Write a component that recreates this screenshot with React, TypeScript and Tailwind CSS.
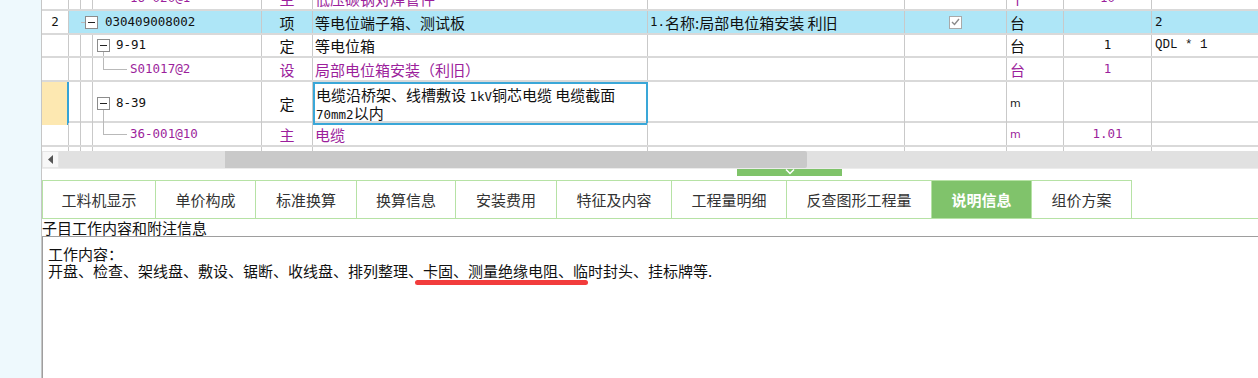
import React from 'react'

const GRID = 'grid grid-cols-[27px_12px_12px_169px_51px_335px_257px_102px_57px_88px_106px]'
const V = 'border-r border-[#c9c9c9]'
const ROW = 'border-b-2 border-[#d9d9d9]'
const PURPLE = 'text-[#9c1f9c]'
const MONO = "font-['DejaVu_Sans_Mono',monospace] text-[12.5px]"
const HL = 'bg-[#aee6f7]'

function Minus() {
  return (
    <span className="flex h-[13px] w-[13px] shrink-0 items-center justify-center border border-[#8c8c8c] bg-white">
      <span className="h-px w-[7px] bg-[#222]" />
    </span>
  )
}

// dim lines of the tree column
function Tline({ className }: { className: string }) {
  return <span className={`absolute bg-[#b9b9b9] ${className}`} />
}

function Check() {
  return (
    <span className="flex h-[13px] w-[13px] items-center justify-center border border-[#a9a9a9] bg-white">
      <svg width="9" height="8" viewBox="0 0 9 8">
        <path d="M1 4 L3.5 6.5 L8 1" fill="none" stroke="#8a8a8a" strokeWidth="1.4" />
      </svg>
    </span>
  )
}

function Table() {
  return (
    <div className="flex h-[151px] flex-col overflow-hidden">
      {/* row cut by the top edge */}
      <div className={`${GRID} ${ROW} -mt-[13px] h-[24px] shrink-0 ${PURPLE}`}>
        <div className={V} />
        <div className={V} />
        <div className={V} />
        <div className={`${V} flex items-center pl-[37px] ${MONO}`}>16-020@1</div>
        <div className={`${V} flex items-center justify-center`}>主</div>
        <div className={`${V} flex items-center pl-[2px]`}>低压碳钢对焊管件</div>
        <div className={V} />
        <div className={V} />
        <div className={`${V} flex items-center pl-[3px]`}>个</div>
        <div className={`${V} flex items-center justify-center ${MONO}`}>10</div>
        <div />
      </div>

      {/* 2 - 030409008002 */}
      <div className={`${GRID} ${ROW} h-[24px] shrink-0`}>
        <div className={`${V} flex items-center justify-center bg-white ${MONO}`}>2</div>
        <div className={`${V} ${HL} relative col-span-3 flex items-center pl-[16px]`}>
          <Tline className="left-[12px] top-1/2 h-px w-[4px]" />
          <Minus />
          <span className={`ml-[7px] ${MONO}`}>030409008002</span>
        </div>
        <div className={`${V} ${HL} flex items-center justify-center`}>项</div>
        <div className={`${V} ${HL} flex items-center pl-[2px]`}>等电位端子箱、测试板</div>
        <div className={`${V} ${HL} flex items-center pl-[2px]`}>
          <span className={MONO}>1.</span>名称:局部电位箱安装 利旧
        </div>
        <div className={`${V} ${HL} flex items-center justify-center`}>
          <Check />
        </div>
        <div className={`${V} ${HL} flex items-center pl-[3px]`}>台</div>
        <div className={`${V} ${HL}`} />
        <div className={`${HL} flex items-center pl-[3px] ${MONO}`}>2</div>
      </div>

      {/* 9-91 */}
      <div className={`${GRID} ${ROW} h-[23px] shrink-0`}>
        <div className={V} />
        <div className={V} />
        <div className={V} />
        <div className={`${V} relative flex items-center pl-[4px]`}>
          <Tline className="bottom-0 left-[10px] top-[calc(50%+6px)] w-px" />
          <Minus />
          <span className={`ml-[6px] ${MONO}`}>9-91</span>
        </div>
        <div className={`${V} flex items-center justify-center`}>定</div>
        <div className={`${V} flex items-center pl-[2px]`}>等电位箱</div>
        <div className={V} />
        <div className={V} />
        <div className={`${V} flex items-center pl-[3px]`}>台</div>
        <div className={`${V} flex items-center justify-center ${MONO}`}>1</div>
        <div className="flex items-center pl-[3px] font-['Liberation_Mono',monospace] text-[12.5px]">QDL * 1</div>
      </div>

      {/* S01017@2 */}
      <div className={`${GRID} ${ROW} h-[24px] shrink-0 ${PURPLE}`}>
        <div className={V} />
        <div className={V} />
        <div className={V} />
        <div className={`${V} relative flex items-center pl-[37px]`}>
          <Tline className="left-[10px] top-0 h-1/2 w-px" />
          <Tline className="left-[10px] top-1/2 h-px w-[24px]" />
          <span className={MONO}>S01017@2</span>
        </div>
        <div className={`${V} flex items-center justify-center`}>设</div>
        <div className={`${V} flex items-center pl-[2px]`}>局部电位箱安装（利旧）</div>
        <div className={V} />
        <div className={V} />
        <div className={`${V} flex items-center pl-[3px]`}>台</div>
        <div className={`${V} flex items-center justify-center ${MONO}`}>1</div>
        <div />
      </div>

      {/* 8-39 */}
      <div className={`${GRID} ${ROW} h-[41px] shrink-0`}>
        <div className="border-r-2 border-[#35a3d6] bg-[#fde8b1]" />
        <div className={V} />
        <div className={V} />
        <div className={`${V} relative flex items-center pl-[4px]`}>
          <Tline className="bottom-0 left-[10px] top-[calc(50%+6px)] w-px" />
          <Minus />
          <span className={`ml-[6px] ${MONO}`}>8-39</span>
        </div>
        <div className={`${V} flex items-center justify-center`}>定</div>
        <div className="flex flex-col justify-center border-2 border-[#3aa7d8] pl-[1px] pt-[3px] leading-[16px]">
          <span>
            电缆沿桥架、线槽敷设 <span className={MONO}>1kV</span>铜芯电缆 电缆截面
          </span>
          <span>
            <span className={MONO}>70mm2</span>以内
          </span>
        </div>
        <div className={V} />
        <div className={V} />
        <div className={`${V} flex items-center pl-[3px] font-['DejaVu_Sans',sans-serif] text-[11px] text-[#222]`}>m</div>
        <div className={V} />
        <div />
      </div>

      {/* 36-001@10 */}
      <div className={`${GRID} ${ROW} h-[24px] shrink-0 ${PURPLE}`}>
        <div className={V} />
        <div className={V} />
        <div className={V} />
        <div className={`${V} relative flex items-center pl-[37px]`}>
          <Tline className="left-[10px] top-0 h-1/2 w-px" />
          <Tline className="left-[10px] top-1/2 h-px w-[24px]" />
          <span className={MONO}>36-001@10</span>
        </div>
        <div className={`${V} flex items-center justify-center`}>主</div>
        <div className={`${V} flex items-center pl-[2px]`}>电缆</div>
        <div className={V} />
        <div className={V} />
        <div className={`${V} flex items-center pl-[3px] font-['DejaVu_Sans',sans-serif] text-[11px]`}>m</div>
        <div className={`${V} flex items-center justify-center ${MONO}`}>1.01</div>
        <div />
      </div>

      {/* next row, barely visible */}
      <div className={`${GRID} h-[10px] shrink-0`}>
        <div className={V} />
        <div className={V} />
        <div className={V} />
        <div className={V} />
        <div className={V} />
        <div className={V} />
        <div className={V} />
        <div className={V} />
        <div className={V} />
        <div className={V} />
        <div />
      </div>
    </div>
  )
}

function Scrollbar() {
  return (
    <div className="flex h-[17px] shrink-0 bg-[#e1e1e1]">
      <div className="flex w-[17px] items-center justify-center border border-[#e6e6e6] bg-[#f7f7f7]">
        <svg width="6" height="9" viewBox="0 0 6 9">
          <path d="M5 0 L0 4.5 L5 9 Z" fill="#555" />
        </svg>
      </div>
      <div className="ml-[166px] h-full w-[582px] rounded-r-[2px] bg-[#c9c9c9]" />
    </div>
  )
}

const TABS = [
  { t: '工料机显示', w: 'w-[114px] border-l' },
  { t: '单价构成', w: 'w-[100px]' },
  { t: '标准换算', w: 'w-[101px]' },
  { t: '换算信息', w: 'w-[99px]' },
  { t: '安装费用', w: 'w-[101px]' },
  { t: '特征及内容', w: 'w-[115px]' },
  { t: '工程量明细', w: 'w-[115px]' },
  { t: '反查图形工程量', w: 'w-[145px]' },
  { t: '说明信息', w: 'w-[100px]' },
  { t: '组价方案', w: 'w-[100px]' },
]

function Tabs() {
  return (
    <div className="flex h-[39px] shrink-0 border-b border-[#b6e2a5]">
      {TABS.map(({ t, w }) => (
        <div
          key={t}
          className={`flex shrink-0 items-center justify-center border-t border-r border-[#b6e2a5] text-[15px] ${w} ${
            t === '说明信息' ? 'bg-[#80c36b] font-bold text-white' : 'text-[#333]'
          }`}
        >
          {t}
        </div>
      ))}
    </div>
  )
}

export default function App() {
  return (
    <div className="flex h-[378px] w-[1258px] overflow-hidden bg-white font-['Noto_Sans_CJK_SC',sans-serif] text-[15px] leading-none text-[#111]">
      <div className="w-[42px] shrink-0 border-r border-[#c6c6c6] bg-[#eef9fd]" />
      <div className="flex min-w-0 flex-1 flex-col">
        <Table />
        <Scrollbar />
        <div className="h-[12px] shrink-0 border-t border-[#ececec]">
          <div className="ml-[695px] flex h-[7px] w-[105px] justify-center bg-[#7fc36a]">
            <svg width="10" height="6" viewBox="0 0 10 6">
              <path d="M1 0.5 L5 4.5 L9 0.5" fill="none" stroke="#fff" strokeWidth="1.5" />
            </svg>
          </div>
        </div>
        <Tabs />
        <div className="h-[17px] shrink-0 leading-[17px]">子目工作内容和附注信息</div>
        <div className="flex-1 border-l border-t border-[#9e9e9e] px-[5px] pt-[8px] leading-[17px]">
          <div>工作内容：</div>
          <div>
            开盘、检查、架线盘、敷设、锯断、收线盘、排列整理、
            <span className="relative inline-block">
              卡固、测量绝缘电阻、
              <span className="absolute left-[-8px] top-[18px] h-[5px] w-[173px] rounded-full bg-[#f23c3c]" />
            </span>
            临时封头、挂标牌等.
          </div>
        </div>
      </div>
    </div>
  )
}
